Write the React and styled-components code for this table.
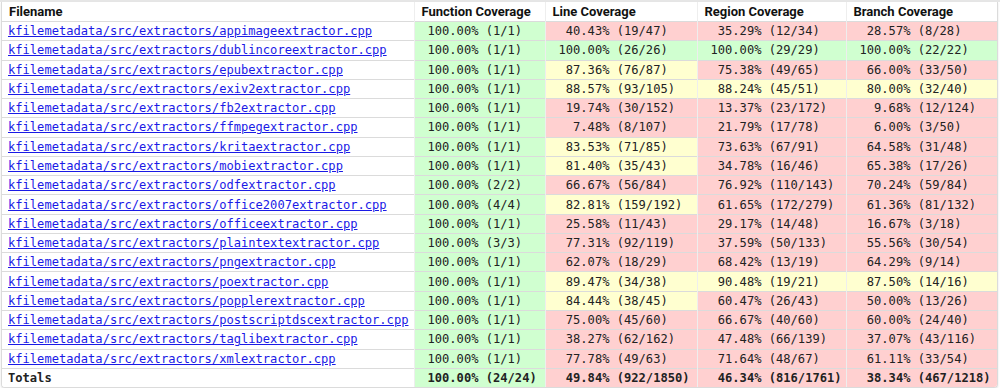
import React from 'react'
import styled, { createGlobalStyle } from 'styled-components'

const Global = createGlobalStyle`
  html, body { margin: 0; padding: 0; background: #fff; }
`

const Page = styled.div`
  border-top: 2px solid #e6e6e6;
  padding: 0 0 0 1px;
`

const Frame = styled.div`
  display: inline-block;
  border: 1px solid #dbdbdb;
  border-top: none;
  border-radius: 0 0 4px 4px;
  box-shadow: 0 1px 2px rgba(0, 0, 0, 0.12);
  overflow: hidden;
`

const Table = styled.table`
  border-collapse: collapse;
  border-spacing: 0;
  table-layout: fixed;
  width: 995px;
`

const Head = styled.th`
  font-family: Roboto, "Liberation Sans", sans-serif;
  font-weight: bold;
  font-size: 13px;
  color: #111;
  text-align: left;
  padding: 0 7px;
  height: 19px;
  background: #fff;
  border-right: 1px solid #eee;
  &:last-child { border-right: none; }
`

const Row = styled.tr`
  border-top: 1px solid #dbdbdb;
`

const tints = { green: '#d0ffd0', yellow: '#ffffd0', red: '#ffd0d0', none: '#fff' }

const Cell = styled.td`
  font-family: "DejaVu Sans Mono", "Liberation Mono", monospace;
  font-size: 12.1px;
  font-weight: ${p => (p.$bold ? 'bold' : 'normal')};
  color: #222;
  height: 18.28px;
  padding: 0 0 0 ${p => (p.$first ? '6px' : '13px')};
  white-space: pre;
  overflow: hidden;
  background: ${p => tints[p.$tint || 'none']};
  border-right: 1px solid #eee;
  &:last-child { border-right: none; }
`

const FileLink = styled.a`
  color: #1a1ae6;
  text-decoration: underline;
`

const rows = [
  ['appimageextractor', [1, 1], [19, 47], [12, 34], [8, 28]],
  ['dublincoreextractor', [1, 1], [26, 26], [29, 29], [22, 22]],
  ['epubextractor', [1, 1], [76, 87], [49, 65], [33, 50]],
  ['exiv2extractor', [1, 1], [93, 105], [45, 51], [32, 40]],
  ['fb2extractor', [1, 1], [30, 152], [23, 172], [12, 124]],
  ['ffmpegextractor', [1, 1], [8, 107], [17, 78], [3, 50]],
  ['kritaextractor', [1, 1], [71, 85], [67, 91], [31, 48]],
  ['mobiextractor', [1, 1], [35, 43], [16, 46], [17, 26]],
  ['odfextractor', [2, 2], [56, 84], [110, 143], [59, 84]],
  ['office2007extractor', [4, 4], [159, 192], [172, 279], [81, 132]],
  ['officeextractor', [1, 1], [11, 43], [14, 48], [3, 18]],
  ['plaintextextractor', [3, 3], [92, 119], [50, 133], [30, 54]],
  ['pngextractor', [1, 1], [18, 29], [13, 19], [9, 14]],
  ['poextractor', [1, 1], [34, 38], [19, 21], [14, 16]],
  ['popplerextractor', [1, 1], [38, 45], [26, 43], [13, 26]],
  ['postscriptdscextractor', [1, 1], [45, 60], [40, 60], [24, 40]],
  ['taglibextractor', [1, 1], [62, 162], [66, 139], [43, 116]],
  ['xmlextractor', [1, 1], [49, 63], [48, 67], [33, 54]],
]

const totals = [[24, 24], [922, 1850], [816, 1761], [467, 1218]]

const tintFor = ([hit, all]) => {
  const pct = (hit * 100) / all
  if (pct >= 100) return 'green'
  if (pct >= 80) return 'yellow'
  return 'red'
}

const label = ([hit, all]) =>
  `${((hit * 100) / all).toFixed(2)}%`.padStart(7, ' ') + ` (${hit}/${all})`

const widths = [412, 131, 152, 149, 151]

const App = () => (
  <Page>
    <Global />
    <Frame>
      <Table>
        <colgroup>
          {widths.map((w, i) => <col key={i} style={{ width: w }} />)}
        </colgroup>
        <thead>
          <tr>
            <Head>Filename</Head>
            <Head>Function Coverage</Head>
            <Head>Line Coverage</Head>
            <Head>Region Coverage</Head>
            <Head>Branch Coverage</Head>
          </tr>
        </thead>
        <tbody>
          {rows.map(([name, ...stats]) => (
            <Row key={name}>
              <Cell $first>
                <FileLink href="#">{`kfilemetadata/src/extractors/${name}.cpp`}</FileLink>
              </Cell>
              {stats.map((s, i) => (
                <Cell key={i} $tint={tintFor(s)}>{label(s)}</Cell>
              ))}
            </Row>
          ))}
          <Row>
            <Cell $first $bold>Totals</Cell>
            {totals.map((s, i) => (
              <Cell key={i} $bold $tint={tintFor(s)}>{label(s)}</Cell>
            ))}
          </Row>
        </tbody>
      </Table>
    </Frame>
  </Page>
)

export default App
